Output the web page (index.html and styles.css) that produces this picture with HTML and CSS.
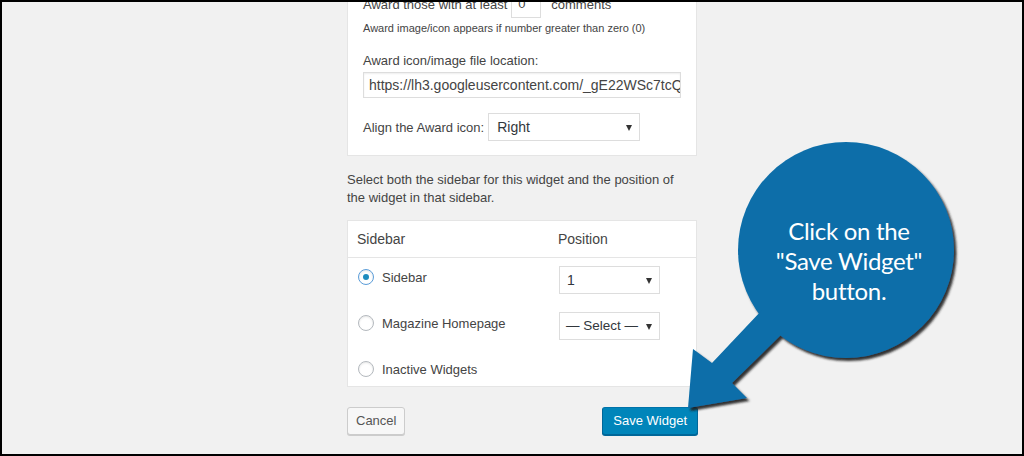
FILE: index.html
```html
<!DOCTYPE html>
<html>
<head>
<meta charset="utf-8">
<link rel="stylesheet" href="styles.css">
</head>
<body>
<div class="frame">
  <div class="col">
    <div class="card">
      <div class="row-first">
        <span>Award those with at least</span>
        <span class="num">0</span>
        <span>comments</span>
      </div>
      <div class="small">Award image/icon appears if number greater than zero (0)</div>
      <div class="label">Award icon/image file location:</div>
      <div class="textbox">https://lh3.googleusercontent.com/_gE22WSc7tcQ</div>
      <div class="align-row">
        <span>Align the Award icon:</span>
        <span class="select sel-align">Right</span>
      </div>
    </div>
    <p class="desc">Select both the sidebar for this widget and the position of the widget in that sidebar.</p>
    <div class="table">
      <div class="thead">
        <span class="c1">Sidebar</span>
        <span class="c2">Position</span>
      </div>
      <div class="tbody">
        <div class="trow">
          <span class="c1 radio-line"><span class="radio checked"></span>Sidebar</span>
          <span class="c2"><span class="select sel-pos">1</span></span>
        </div>
        <div class="trow">
          <span class="c1 radio-line"><span class="radio"></span>Magazine Homepage</span>
          <span class="c2"><span class="select sel-pos sel-small">— Select —</span></span>
        </div>
        <div class="trow">
          <span class="c1 radio-line"><span class="radio"></span>Inactive Widgets</span>
        </div>
      </div>
    </div>
    <div class="actions">
      <span class="btn">Cancel</span>
      <span class="btn primary">Save Widget</span>
    </div>
  </div>

  <svg class="callout" width="1024" height="456" viewBox="0 0 1024 456">
    <defs>
      <filter id="sh" x="-10%" y="-10%" width="130%" height="130%">
        <feDropShadow dx="2.5" dy="3" stdDeviation="1.2" flood-color="#1a1a1a" flood-opacity="0.9"/>
      </filter>
    </defs>
    <g filter="url(#sh)" fill="#0a6ea9">
      <circle cx="846" cy="250" r="108"/>
      <polygon points="762,310 712,363 693,349 688,408 747,398 732,383 784,332"/>
    </g>
  </svg>
  <div class="bubble-text">Click on the<br>"Save Widget"<br>button.</div>
</div>
</body>
</html>
```

FILE: styles.css
```css
* { box-sizing: border-box; }
html, body { margin: 0; padding: 0; }
body {
  width: 1024px;
  height: 456px;
  overflow: hidden;
  font-family: "Liberation Sans", Arial, sans-serif;
  font-size: 13px;
  color: #444;
}
.frame {
  position: relative;
  width: 1024px;
  height: 456px;
  border: 2px solid #000;
  background: #f1f1f1;
  overflow: hidden;
}
.col {
  width: 351px;
  margin-left: 345px;
}
.card {
  margin-top: -26px;
  width: 350px;
  background: #fff;
  border: 1px solid #e5e5e5;
  padding: 13px 15px 14px;
}
.row-first {
  display: flex;
  align-items: center;
  height: 28px;
  font-size: 13px;
}
.num {
  width: 30px;
  height: 28px;
  border: 1px solid #ddd;
  margin: 0 10px 0 4px;
  padding: 0 6px;
  line-height: 26px;
}
.small {
  margin-top: 2px;
  font-size: 11px;
  line-height: 16px;
}
.label {
  margin-top: 16px;
  line-height: 18px;
}
.textbox {
  margin-top: 2px;
  height: 26px;
  border: 1px solid #ddd;
  padding: 0 5px;
  line-height: 24px;
  font-size: 14px;
  white-space: nowrap;
  overflow: hidden;
  box-shadow: inset 0 1px 2px rgba(0,0,0,0.07);
}
.align-row {
  margin-top: 15px;
  display: flex;
  align-items: center;
  gap: 4px;
  height: 28px;
}
.select {
  position: relative;
  display: block;
  height: 28px;
  border: 1px solid #ddd;
  padding: 0 8px;
  line-height: 26px;
  font-size: 14px;
  color: #32373c;
  background: #fff;
}
.select::after {
  content: "";
  position: absolute;
  right: 7px;
  top: 11px;
  border-left: 3.5px solid transparent;
  border-right: 3.5px solid transparent;
  border-top: 6px solid #333;
}
.sel-align { width: 152px; }
.sel-pos { width: 101px; padding: 0 7px; }
.sel-small { font-size: 13.5px; padding: 0 6px; }
.desc {
  margin: 15px 0 0;
  line-height: 18px;
  width: 336px;
}
.table {
  margin-top: 13px;
  width: 350px;
  background: #fff;
  border: 1px solid #e5e5e5;
}
.thead {
  display: flex;
  align-items: center;
  height: 37px;
  border-bottom: 1px solid #e5e5e5;
  font-size: 14px;
}
.c1 { width: 200px; padding-left: 9px; }
.c2 { flex: 1; padding-left: 10px; }
.tbody { padding-top: 8px; }
.trow {
  display: flex;
  align-items: flex-start;
  height: 28px;
  margin-bottom: 18px;
}
.trow:last-child { margin-bottom: 0; }
.trow .c2 { padding-left: 11px; }
.radio-line {
  display: flex;
  align-items: center;
  height: 22px;
  padding-left: 10px;
}
.radio {
  width: 16px;
  height: 16px;
  border-radius: 50%;
  border: 1px solid #b4b9be;
  box-shadow: inset 0 1px 2px rgba(0,0,0,0.1);
  margin-right: 8px;
  position: relative;
  background: #fff;
}
.radio.checked {
  border-color: #5b9dd9;
}
.radio.checked::after {
  content: "";
  position: absolute;
  left: 4px;
  top: 4px;
  width: 6px;
  height: 6px;
  border-radius: 50%;
  background: #1e8cbe;
}
.actions {
  margin-top: 20px;
  display: flex;
  justify-content: space-between;
}
.btn {
  display: block;
  height: 28px;
  line-height: 26px;
  padding: 0 8px;
  border: 1px solid #ccc;
  border-radius: 3px;
  background: #f7f7f7;
  box-shadow: 0 1px 0 #ccc;
  color: #555;
  font-size: 13px;
}
.btn.primary {
  padding: 0 10px;
  background: #0085ba;
  border-color: #0073aa #006799 #006799;
  box-shadow: 0 1px 0 #006799;
  color: #fff;
}
.callout {
  position: absolute;
  left: -2px;
  top: -2px;
  pointer-events: none;
}
.bubble-text {
  position: absolute;
  left: 747px;
  top: 214px;
  width: 200px;
  text-align: center;
  color: #fff;
  font-family: Lato, "Open Sans", sans-serif;
  font-size: 24px;
  line-height: 30px;
  letter-spacing: -0.3px;
}
```
